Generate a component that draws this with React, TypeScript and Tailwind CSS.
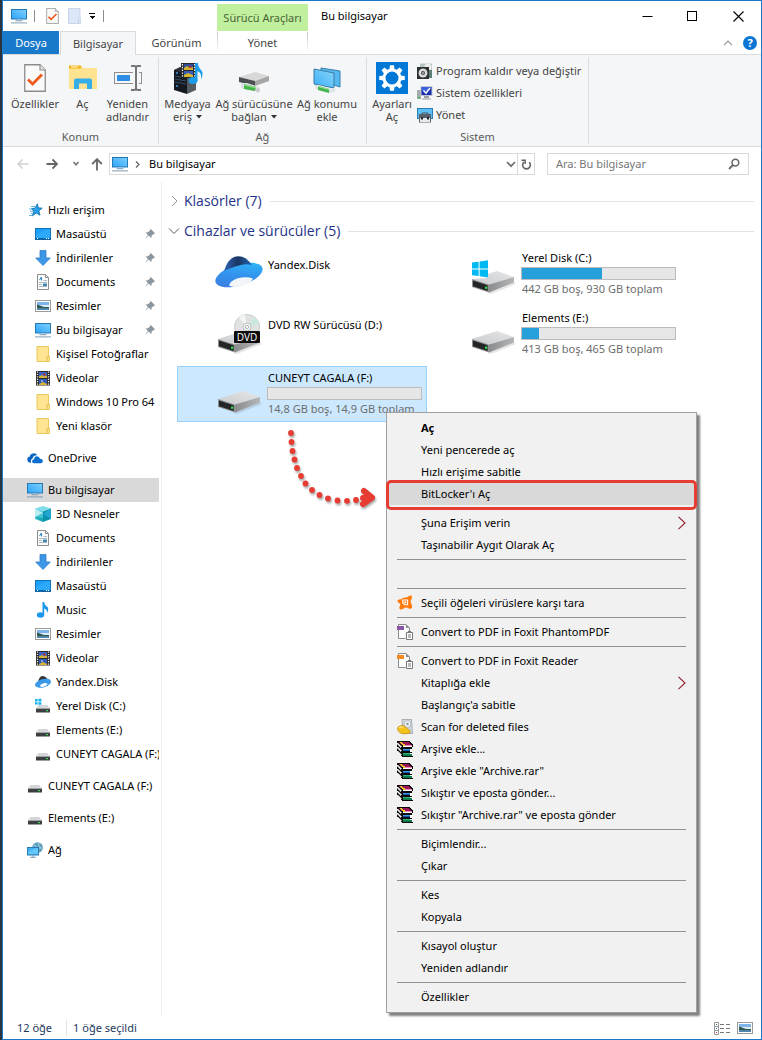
import type { ReactNode } from "react";

function PcIcon({ className = "w-4 h-4" }: { className?: string }) {
  return (
    <svg viewBox="0 0 16 16" className={className} aria-hidden="true">
      <defs>
        <linearGradient id="pcScreen" x1="0" y1="1" x2="1" y2="0">
          <stop offset="0" stopColor="#2ba3f7" />
          <stop offset="1" stopColor="#7fd0ff" />
        </linearGradient>
      </defs>
      <rect x="0.5" y="1.5" width="15" height="9.5" fill="url(#pcScreen)" stroke="#2479b5" />
      <rect x="6" y="11.5" width="4" height="1" fill="#b9cad6" />
      <rect x="4.5" y="12.3" width="7" height="0.9" fill="#6f93ad" />
      <rect x="0" y="14.4" width="16" height="1" fill="#7d9db5" />
    </svg>
  );
}

function CheckDoc({ className }: { className: string }) {
  return (
    <svg viewBox="0 0 22 28" className={className} aria-hidden="true">
      <path d="M0.75 0.75H16L21.25 6V27.25H0.75Z" fill="#fafafa" stroke="#8c8c8c" strokeWidth="1.3" />
      <path d="M16 0.75V6H21.25" fill="#e6e6e6" stroke="#8c8c8c" strokeWidth="1.1" />
      <path d="M4 15.5L8.6 20L18 10.5" fill="none" stroke="#ee5a1e" strokeWidth="2.8" />
    </svg>
  );
}

function OpenFolderIcon() {
  return (
    <svg viewBox="0 0 30 28" className="h-[28px] w-[30px]" aria-hidden="true">
      <path d="M1 2H13L15 4H29V25H1Z" fill="#ffe18c" />
      <rect x="1" y="1.5" width="12" height="3" fill="#efb416" />
      <rect x="3" y="2.3" width="7" height="1.2" fill="#fff2c4" />
      <path d="M1 6H13L15 4H29V25H1Z" fill="#ffe391" />
      <path d="M6 25V16.5Q6 14.5 8 14.5H22Q24 14.5 24 16.5V25H19V19.5H11V25Z" fill="#38aee8" />
    </svg>
  );
}

function RenameIcon() {
  return (
    <svg viewBox="0 0 30 28" className="h-[28px] w-[30px]" aria-hidden="true">
      <rect x="1.5" y="8.5" width="27" height="11" fill="#f6f7f8" stroke="#8f8f8f" />
      <rect x="4" y="11" width="13" height="6" fill="#2e8ee6" />
      <rect x="20" y="7" width="6" height="14" fill="#f5f6f7" />
      <path d="M18 2H21Q23 2 23 4Q23 2 25 2H28M23 3V25M18 26H21Q23 26 23 24Q23 26 25 26H28" fill="none" stroke="#757575" strokeWidth="2" />
    </svg>
  );
}

function MediaIcon() {
  return (
    <svg viewBox="0 0 32 32" className="h-8 w-8" aria-hidden="true">
      <path d="M2 8L15 4V32L2 28Z" fill="#14191f" />
      <path d="M15 13L24 11V28L15 32Z" fill="#565b60" />
      <path d="M2 8L8 5L24 7V12L15 13Z" fill="#2b3036" />
      <path d="M3 14L14 16M3 17L14 19M3 20L14 22" stroke="#3d5b78" strokeWidth="0.8" />
      <circle cx="5" cy="11" r="0.9" fill="#3fa9f5" />
      <circle cx="5" cy="24" r="0.9" fill="#3fa9f5" />
      <rect x="9" y="1" width="15" height="15" fill="#22262b" />
      <path d="M10.5 2V16M22.5 2V16" stroke="#f2f2f2" strokeWidth="1.2" strokeDasharray="1.4 1.4" />
      <rect x="12" y="2" width="9" height="6" fill="#324c9c" />
      <rect x="12" y="9" width="9" height="6" fill="#385cb8" />
      <path d="M12 8V6L15 4L18 6L21 5V8ZM12 15V13L16 11L21 13V15Z" fill="#d5b52f" />
      <circle cx="18" cy="5" r="1.3" fill="#b33c2b" />
      <ellipse cx="21" cy="18.5" rx="4.5" ry="3.5" fill="#1d9cea" />
      <path d="M23 19V1H26Q26 5 29.5 8.5Q32 12 29 17Q30 11 25.5 9V19Z" fill="#1d9cea" />
    </svg>
  );
}

function NetDriveIcon() {
  return (
    <svg viewBox="0 0 32 32" className="h-8 w-8" aria-hidden="true">
      <path d="M1 15L17 10L31 14L17 19Z" fill="#d9d9d9" />
      <path d="M1 15L17 19V24L1 20Z" fill="#4b4f52" />
      <path d="M17 19L31 14V19L17 24Z" fill="#a6a6a6" />
      <path d="M3 21L9 21L21 25L20 30L9 28L3 26Z" fill="#dfe3e5" />
      <path d="M6 22L18 25L17 29L6 27Z" fill="#43b54a" />
      <path d="M6 22L18 25V26.5L6 23.5Z" fill="#8cdc86" />
      <ellipse cx="20" cy="28" rx="2" ry="2.6" fill="#c8cdd0" />
    </svg>
  );
}

function NetPlaceIcon() {
  return (
    <svg viewBox="0 0 32 32" className="h-8 w-8" aria-hidden="true">
      <defs>
        <linearGradient id="npScreen" x1="0" y1="1" x2="1" y2="0">
          <stop offset="0" stopColor="#3aaef5" />
          <stop offset="1" stopColor="#8bd7fb" />
        </linearGradient>
      </defs>
      <path d="M10 6L29 9V25L10 19Z" fill="#56b9f2" stroke="#367ea9" />
      <path d="M3 7L23 11V26L3 22Z" fill="url(#npScreen)" stroke="#397ba2" />
      <path d="M4 23L8 23L21 27L24 25V30L19 31L4 27Z" fill="#dfe6e8" />
      <path d="M7 24L18 27V31L7 28Z" fill="#43b54a" />
      <path d="M7 24L18 27V28L7 25Z" fill="#9be394" />
    </svg>
  );
}

function SettingsIcon() {
  const teeth = [0, 45, 90, 135, 180, 225, 270, 315];
  return (
    <svg viewBox="0 0 32 32" className="h-8 w-8" aria-hidden="true">
      <rect width="32" height="32" fill="#0078d7" />
      {teeth.map((a) => (
        <path key={a} d="M13.4 8L14 3.2H18L18.6 8Z" fill="#fff" transform={`rotate(${a} 16 16)`} />
      ))}
      <circle cx="16" cy="16" r="8" fill="none" stroke="#fff" strokeWidth="3" />
    </svg>
  );
}

function ProgramIcon() {
  return (
    <svg viewBox="0 0 16 16" className="h-4 w-4 shrink-0" aria-hidden="true">
      <path d="M3 0.5H15V13H3Z" fill="#b9c6c0" />
      <circle cx="11" cy="4" r="3.5" fill="#e9ece8" />
      <path d="M10 7H15V15H10Z" fill="#5f7f75" />
      <rect x="0" y="4" width="12" height="12" fill="#2c2f31" />
      <circle cx="6" cy="10" r="4.5" fill="#dadada" />
      <circle cx="6" cy="10" r="2" fill="#4a4d50" />
      <circle cx="6" cy="10" r="0.8" fill="#f4f4f4" />
    </svg>
  );
}

function SystemIcon() {
  return (
    <svg viewBox="0 0 16 16" className="h-4 w-4 shrink-0" aria-hidden="true">
      <rect x="0" y="5" width="4" height="9" fill="#a5adaa" />
      <rect x="1" y="12" width="2" height="1.4" fill="#3bb54a" />
      <rect x="4" y="1.5" width="11" height="9" fill="#1a2fb0" stroke="#c3c7cb" />
      <path d="M5 2H14L11 6H4.5Z" fill="#3b61e0" />
      <path d="M6.5 5.5L9 8.2L13 3" fill="none" stroke="#fff" strokeWidth="1.5" />
      <rect x="7" y="11" width="5" height="2" fill="#9a9fa3" />
      <rect x="5" y="13" width="9" height="2" fill="#c5cacd" />
    </svg>
  );
}

function ManageIcon() {
  return (
    <svg viewBox="0 0 16 16" className="h-4 w-4 shrink-0" aria-hidden="true">
      <rect x="0.5" y="1.5" width="15" height="10" fill="#5cc0f7" stroke="#2b7fb5" />
      <path d="M5 7.5V6H11V7.5" fill="none" stroke="#4c545b" />
      <rect x="2" y="7" width="12" height="8.5" fill="#59626a" />
      <rect x="3" y="11" width="10" height="4" fill="#e8ebed" />
      <rect x="4" y="10" width="2" height="2.5" fill="#22272b" />
      <rect x="10" y="10" width="2" height="2.5" fill="#22272b" />
    </svg>
  );
}

function StarIcon() {
  return (
    <svg viewBox="0 0 16 16" className="h-4 w-4" aria-hidden="true">
      <path d="M10.4 1.8L11.2 5.8L15.2 6.2L11.8 8.8L13 13.2L9.2 11L5.5 13.8L6.8 9.4L4.6 6.6L8 6.2Z" fill="#26a0ec" stroke="#1673b0" strokeWidth="0.9" />
      <path d="M4 4.5H8M2 7H5.5M3 9.3H6M4 11.5H6M2 13.5H5" stroke="#4ea9df" strokeWidth="0.9" />
    </svg>
  );
}

function DesktopIcon() {
  return (
    <svg viewBox="0 0 16 16" className="h-4 w-4" aria-hidden="true">
      <rect x="0.5" y="2.5" width="15" height="11" fill="#1aa0fb" stroke="#1272b5" />
      <path d="M1 13V8L13 3H15V13Z" fill="#3aaffd" opacity=".6" />
      <rect x="0" y="12" width="16" height="2" fill="#0c66a8" />
      <path d="M2 12.5H3M11 12.5H12M13 12.5H14" stroke="#fff" />
    </svg>
  );
}

function DownIcon() {
  return (
    <svg viewBox="0 0 16 16" className="h-4 w-4" aria-hidden="true">
      <path d="M5 0.5H11V8H15.3L8 15.5L0.7 8H5Z" fill="#3c97e6" stroke="#2f7ec9" strokeWidth="0.8" />
    </svg>
  );
}

function DocIcon() {
  return (
    <svg viewBox="0 0 16 16" className="h-4 w-4" aria-hidden="true">
      <path d="M2.5 0.5H10.5L13.5 3.5V15.5H2.5Z" fill="#fdfdfd" stroke="#8f8f8f" />
      <path d="M10.5 0.5V3.5H13.5" fill="none" stroke="#8f8f8f" />
      <path d="M8.5 6.5H12M4 8.5H12M4 10.5H7M4 12.5H12" stroke="#9db1c0" strokeWidth="0.9" />
      <path d="M4.5 6L6.5 3V6.5" stroke="#2584cb" fill="none" />
      <rect x="8" y="9.5" width="4" height="2.5" fill="#3f87ad" />
    </svg>
  );
}

function PictureIcon() {
  return (
    <svg viewBox="0 0 16 16" className="h-4 w-4" aria-hidden="true">
      <rect x="0.5" y="2.5" width="15" height="11" fill="#fff" stroke="#9a9a9a" />
      <rect x="2" y="4" width="12" height="4" fill="#7fb4ea" />
      <rect x="2" y="7" width="12" height="2" fill="#dcebf3" />
      <path d="M2 6.5L5 7.6L9 9H14V10H2Z" fill="#315a4f" />
      <rect x="2" y="10" width="12" height="2" fill="#4f83ab" />
    </svg>
  );
}

function FolderIcon() {
  return (
    <svg viewBox="0 0 16 16" className="h-4 w-4" aria-hidden="true">
      <path d="M2 0.5H13.5V10.5H14.5V15.5H2Z" fill="#ffe591" stroke="#e9c354" strokeWidth="0.9" />
      <path d="M12 15.5V11Q12 10.3 12.8 10.3H14.3" fill="none" stroke="#e0b640" strokeWidth="0.9" />
    </svg>
  );
}

function FilmIcon() {
  return (
    <svg viewBox="0 0 16 16" className="h-4 w-4" aria-hidden="true">
      <rect x="1" y="1" width="14" height="14.5" fill="#2a2a2a" />
      <path d="M2.5 1.5V15M13.5 1.5V15" stroke="#f2f2f2" strokeWidth="1.3" strokeDasharray="1.2 1.2" />
      <rect x="4" y="2" width="8" height="6" fill="#3c66c9" />
      <rect x="4" y="9" width="8" height="6" fill="#3459b6" />
      <path d="M4 8V6.5L7 5L9 6.5L12 5.5V8ZM4 15V14L8 12L12 14V15Z" fill="#d9b535" />
      <circle cx="9.5" cy="4.5" r="1.2" fill="#b33c2b" />
      <circle cx="7" cy="11" r="1" fill="#7fc0e8" />
    </svg>
  );
}

function CloudIcon() {
  return (
    <svg viewBox="0 0 16 16" className="h-4 w-4" aria-hidden="true">
      <path d="M0.3 10Q0 7.2 2.6 6.8Q3 4 5.6 3.6Q8.6 2.6 10.4 5.4Q6.5 5 5.6 8.6Q3.6 9 4 12.8H2.6Q0.6 12.3 0.3 10Z" fill="#0a64c0" />
      <path d="M5 11.6Q5 9.3 7 9.2Q7.4 6.3 10 6.2Q12.4 6.3 13 8.8Q16 9 15.8 11.6Q15.5 13.2 13.8 13.3H6.8Q5.2 13 5 11.6Z" fill="#0a6fd0" />
    </svg>
  );
}

function CubeIcon() {
  return (
    <svg viewBox="0 0 16 16" className="h-4 w-4" aria-hidden="true">
      <path d="M8 0L16 2.5L8 5.5L0 2.5Z" fill="#7fdcea" />
      <path d="M0 2.5L8 5.5V16L0 13Z" fill="#40c4d2" />
      <path d="M8 5.5L16 2.5V13L8 16Z" fill="#0b93ad" />
      <path d="M0 2.5L8 7L0 11Z" fill="#b9eef3" />
      <path d="M16 2.5L8 8L16 13Z" fill="#22a6d0" />
      <path d="M0 11L8 16L8 12Z" fill="#1ba5b5" />
    </svg>
  );
}

function NoteIcon() {
  return (
    <svg viewBox="0 0 16 16" className="h-4 w-4" aria-hidden="true">
      <ellipse cx="5.5" cy="13" rx="3.7" ry="2.8" fill="#1b98ec" />
      <path d="M7.5 13V0H9Q9.5 3 12 4.5Q14.6 7 12 11Q12.4 7.6 9.2 6.4V13Z" fill="#1b98ec" />
    </svg>
  );
}

function Saucer({ className = "w-4 h-4" }: { className?: string }) {
  return (
    <svg viewBox="0 0 48 34" className={className} aria-hidden="true">
      <defs>
        <linearGradient id="saucerDisc" x1="0" y1="1" x2="1" y2="0">
          <stop offset="0" stopColor="#3d77dc" />
          <stop offset="0.5" stopColor="#3393ee" />
          <stop offset="1" stopColor="#2ec0fb" />
        </linearGradient>
        <linearGradient id="saucerDome" x1="0" y1="0" x2="1" y2="0">
          <stop offset="0" stopColor="#2b62b4" />
          <stop offset="0.5" stopColor="#1c3561" />
          <stop offset="1" stopColor="#2166b5" />
        </linearGradient>
      </defs>
      <ellipse cx="24" cy="20" rx="24.5" ry="10.5" fill="url(#saucerDisc)" transform="rotate(-17 24 20)" />
      <path d="M9 16Q13 4 19 2Q25 0 31 3.5Q35 7 37 10Q30 8 22 11Q14 13.5 9 16Z" fill="url(#saucerDome)" />
      <path d="M14 30.5Q15 26 22 23.5Q31 21 38 23.5Q36 27.5 29 30.5Q20 33.5 14 30.5Z" fill="#f3f5f8" />
    </svg>
  );
}

function SaucerSmall() {
  return (
    <svg viewBox="0 0 16 16" className="h-4 w-4" aria-hidden="true">
      <path d="M3 8Q4 3 7 2Q10 1.5 12.5 5L12 8Z" fill="#33373d" />
      <ellipse cx="8" cy="9.2" rx="8.2" ry="4.1" fill="#3b9ae8" transform="rotate(-16 8 9.2)" />
      <path d="M5 12.2Q5.4 9.8 9 9.2Q11.6 8.8 12.6 10Q11 12.2 8.4 12.8Q6.2 13.2 5 12.2Z" fill="#fff" />
    </svg>
  );
}

function DriveSmall({ windows = false }: { windows?: boolean }) {
  return (
    <svg viewBox="0 0 16 16" className="h-4 w-4" aria-hidden="true">
      <path d="M3.5 7H12.5L15 10.5H1Z" fill="#d4d6d8" />
      <rect x="1" y="10.5" width="14" height="4" fill="#3c3f41" />
      <rect x="1" y="10.2" width="14" height="0.8" fill="#a8abad" />
      <rect x="11" y="12" width="2" height="1.2" fill="#2ee052" />
      {windows && (
        <>
          <rect x="0" y="0" width="7" height="7" fill="#fff" />
          <path d="M0 1H2.6V3.4H0ZM3.4 0.8H6.4V3.4H3.4ZM0 4.2H2.6V6.6H0ZM3.4 4.2H6.4V6.8H3.4Z" fill="#12b3ef" />
        </>
      )}
    </svg>
  );
}

function NetworkIcon() {
  return (
    <svg viewBox="0 0 16 16" className="h-4 w-4" aria-hidden="true">
      <circle cx="10.6" cy="5.5" r="5.3" fill="#5f9fbf" />
      <path d="M7 3Q10 4 9 7M12 1Q10 4 14 6M6 6H15" stroke="#a9d3e3" fill="none" />
      <rect x="0.5" y="5.5" width="11" height="7.5" fill="#3fb2f4" stroke="#2a7cb0" />
      <path d="M1 12V10L9 6H11V12Z" fill="#76cdfb" opacity=".7" />
      <path d="M6 13V15M3 15.3H9" stroke="#7d9db5" />
    </svg>
  );
}

function DriveLarge({ kind }: { kind?: "windows" | "dvd" }) {
  return (
    <svg viewBox="0 0 48 48" className="h-12 w-12" aria-hidden="true">
      <defs>
        <linearGradient id="driveTop" x1="0" y1="1" x2="1" y2="0">
          <stop offset="0" stopColor="#c9cacc" />
          <stop offset="1" stopColor="#e6e7e9" />
        </linearGradient>
        <linearGradient id="driveSide" x1="0" y1="0" x2="1" y2="0">
          <stop offset="0" stopColor="#8b8c8e" />
          <stop offset="1" stopColor="#b5b6b8" />
        </linearGradient>
      </defs>
      <path d="M18 45L44 34L47 36L22 46Z" fill="#000" opacity=".1" />
      <path d="M3 31L28 23L45 29L20 36.5Z" fill="url(#driveTop)" />
      <path d="M20 36.5L45 29V34.5L20 44.5Z" fill="url(#driveSide)" />
      <path d="M3 31L20 36.5V44.5L3 39Z" fill="#8f9092" />
      <path d="M4 32.6L18.7 37.2V43L4 38.2Z" fill="#232527" />
      <rect x="16" y="38.6" width="2.2" height="2.2" fill="#2fe04d" />
      {kind === "windows" && (
        <>
          <path d="M3 14L19 12V30L3 31Z" fill="#fff" />
          <path d="M3 14.6L9.6 13.7V20.4H3ZM10.6 13.5L19 12.3V20.4H10.6ZM3 21.4H9.6V28L3 27.2ZM10.6 21.4H19V29.4L10.6 28.2Z" fill="#00b9f2" />
        </>
      )}
      {kind === "dvd" && (
        <>
          <circle cx="32" cy="19" r="12.6" fill="#dfe2e2" stroke="#c4c8c9" strokeWidth="0.8" />
          <path d="M32 19L24 9.5A12.6 12.6 0 0 1 30 6.6Z" fill="#f3f5f4" />
          <path d="M32 19L40 9.5A12.6 12.6 0 0 1 43.6 14.4Z" fill="#c4ead9" />
          <path d="M32 19L20 21.5A12.6 12.6 0 0 0 22 26.5Z" fill="#e8dcea" />
          <circle cx="32" cy="19" r="4" fill="#f1f3f3" stroke="#b5b9ba" strokeWidth="0.8" />
          <circle cx="32" cy="19" r="1.6" fill="#fff" stroke="#a2a6a7" strokeWidth="0.8" />
          <rect x="19" y="23" width="26" height="12" rx="1" fill="#0e0e0e" />
          <text x="32" y="32.8" textAnchor="middle" fontSize="10" fontFamily="Open Sans, sans-serif" fill="#fff">DVD</text>
        </>
      )}
    </svg>
  );
}

function PinIcon() {
  return (
    <svg viewBox="0 0 12 12" className="h-3 w-3" aria-hidden="true">
      <path d="M6.5 0.8L11.2 5.5L9.6 6L7.6 7.8L7.2 10.2L4.6 7.6L0.8 11.2L3.9 6.9L1.6 4.6L4 4.3L6 2.4Z" fill="#8a959e" />
    </svg>
  );
}

function AvastIcon() {
  return (
    <svg viewBox="0 0 16 16" className="h-4 w-4" aria-hidden="true">
      <path d="M9.5 2.6Q12.6 0 14.6 0.6Q15.6 3 13.6 6Q13.6 8.4 15.2 11Q15.4 13.8 12.8 14Q10.6 12.6 8 12.6Q5.6 14.8 3.2 14.6Q1.4 13.2 3.4 10Q3.4 8.4 0.8 7Q-0.2 5.4 1.6 4.4Q4.2 4.6 5.4 3.2Q7.4 2 9.5 2.6Z" fill="#ff7a0a" />
      <path d="M5.8 5H10.6V9.8H7.6L5.8 8Z" fill="none" stroke="#fff" strokeWidth="1.1" />
      <circle cx="8.2" cy="7.4" r="1.1" fill="#fff" />
    </svg>
  );
}

function FoxitIcon({ color }: { color: string }) {
  return (
    <svg viewBox="0 0 16 16" className="h-4 w-4" aria-hidden="true">
      <path d="M1.5 0.5H9L12.5 4V14.5H1.5Z" fill="#fff" stroke="#8b8b8b" />
      <path d="M9 0.5V4H12.5Z" fill="#8b8b8b" />
      <rect x="0" y="2" width="7" height="4" fill={color} />
      <rect x="8.5" y="7" width="7.5" height="9" fill="#f1f1f1" />
      <path d="M9.5 8.5H15.5V15.5H9.5Z" fill="#fff" stroke="#777" />
      <path d="M11 7.5H14M11 11H14M11 13H14" stroke="#777" />
    </svg>
  );
}

function ScanIcon() {
  return (
    <svg viewBox="0 0 16 16" className="h-4 w-4" aria-hidden="true">
      <path d="M5 0.5H14.5L15.5 14.5H6Z" fill="#cfd6dc" stroke="#9aa3ab" strokeWidth="0.8" />
      <circle cx="10.5" cy="5" r="3.4" fill="#eef2f5" stroke="#9fa9b2" strokeWidth="0.7" />
      <circle cx="10.5" cy="5" r="1.2" fill="#8593a0" />
      <path d="M0.5 10Q0.5 7 4 6.5Q8 6 9.5 9L13 11.5V14L8.5 14.8Q2 15.5 0.5 10Z" fill="#f4c21b" stroke="#bd8b0c" strokeWidth="0.7" />
      <path d="M2 9Q3.4 7.4 6 8" fill="none" stroke="#fff3b0" />
    </svg>
  );
}

function RarIcon() {
  return (
    <svg viewBox="0 0 16 16" className="h-4 w-4" shapeRendering="crispEdges" aria-hidden="true">
      <path d="M0 0H12L16 4V6H15V15H16V16H5L0 11Z" fill="#0c0a0a" />
      <path d="M1 1H11L14 4H5Z" fill="#9c1458" />
      <path d="M5 4H15V5H6Z" fill="#f08cc0" />
      <path d="M6 5H15V6H6Z" fill="#fff" />
      <path d="M3 1H5L6 3H8V5H6Z" fill="#e8d020" />
      <path d="M6 8H15V9H6Z" fill="#3d9be8" />
      <path d="M6 9H15V10H6Z" fill="#1556b0" />
      <path d="M13 8H15V11H13Z" fill="#fff" />
      <path d="M6 12H15V13H6Z" fill="#2fb57c" />
      <path d="M6 13H15V15H6Z" fill="#0b7c4a" />
      <path d="M13 12H15V13H13Z" fill="#fff" />
      <path d="M0 2H1V3H2V4H3V5H4V6H3V5H2V4H1V3H0ZM0 6H1V7H2V8H3V9H4V10H3V9H2V8H1V7H0ZM0 10H1V11H2V12H3V13H4V14H3V13H2V12H1V11H0Z" fill="#f3f3f3" stroke="#f3f3f3" strokeWidth="0.6" />
    </svg>
  );
}

type RibbonButtonProps = { icon: ReactNode; lines: string[]; menu?: boolean; className: string };

function RibbonButton({ icon, lines, menu = false, className }: RibbonButtonProps) {
  return (
    <button type="button" className={`flex shrink-0 flex-col items-center whitespace-nowrap text-[#444] ${className}`}>
      <span className="flex h-8 items-center justify-center">{icon}</span>
      <span className="mt-[3px] leading-[13px]">
        {lines.map((line, i) => (
          <span key={line} className="flex items-center justify-center gap-1">
            {line}
            {menu && i === lines.length - 1 && (
              <svg viewBox="0 0 6 4" className="h-1 w-1.5" aria-hidden="true">
                <path d="M0 0H6L3 3.5Z" fill="#333" />
              </svg>
            )}
          </span>
        ))}
      </span>
    </button>
  );
}

function RibbonGroup({ label, className, children }: { label: string; className: string; children: ReactNode }) {
  return (
    <section aria-label={label} className={`my-0.5 flex shrink-0 flex-col justify-between border-r border-[#dcdde0] ${className}`}>
      <div className="flex pt-[5px]">{children}</div>
      <h2 className="text-center leading-[14px] text-[#5a5a5a]">{label}</h2>
    </section>
  );
}

type NavItem = { label: string; icon: ReactNode; level?: boolean; pinned?: boolean; selected?: boolean };

const navGroups: NavItem[][] = [
  [
    { label: "Hızlı erişim", icon: <StarIcon /> },
    { label: "Masaüstü", icon: <DesktopIcon />, level: true, pinned: true },
    { label: "İndirilenler", icon: <DownIcon />, level: true, pinned: true },
    { label: "Documents", icon: <DocIcon />, level: true, pinned: true },
    { label: "Resimler", icon: <PictureIcon />, level: true, pinned: true },
    { label: "Bu bilgisayar", icon: <PcIcon />, level: true, pinned: true },
    { label: "Kişisel Fotoğraflar", icon: <FolderIcon />, level: true },
    { label: "Videolar", icon: <FilmIcon />, level: true },
    { label: "Windows 10 Pro 64", icon: <FolderIcon />, level: true },
    { label: "Yeni klasör", icon: <FolderIcon />, level: true },
  ],
  [{ label: "OneDrive", icon: <CloudIcon /> }],
  [
    { label: "Bu bilgisayar", icon: <PcIcon />, selected: true },
    { label: "3D Nesneler", icon: <CubeIcon />, level: true },
    { label: "Documents", icon: <DocIcon />, level: true },
    { label: "İndirilenler", icon: <DownIcon />, level: true },
    { label: "Masaüstü", icon: <DesktopIcon />, level: true },
    { label: "Music", icon: <NoteIcon />, level: true },
    { label: "Resimler", icon: <PictureIcon />, level: true },
    { label: "Videolar", icon: <FilmIcon />, level: true },
    { label: "Yandex.Disk", icon: <SaucerSmall />, level: true },
    { label: "Yerel Disk (C:)", icon: <DriveSmall windows />, level: true },
    { label: "Elements (E:)", icon: <DriveSmall />, level: true },
    { label: "CUNEYT CAGALA (F:)", icon: <DriveSmall />, level: true },
  ],
  [{ label: "CUNEYT CAGALA (F:)", icon: <DriveSmall /> }],
  [{ label: "Elements (E:)", icon: <DriveSmall /> }],
  [{ label: "Ağ", icon: <NetworkIcon /> }],
];

type Drive = { name: string; icon: ReactNode; used?: number; info?: string; selected?: boolean };

const drives: Drive[] = [
  { name: "Yandex.Disk", icon: <Saucer className="h-[34px] w-12" /> },
  { name: "Yerel Disk (C:)", icon: <DriveLarge kind="windows" />, used: 52, info: "442 GB boş, 930 GB toplam" },
  { name: "DVD RW Sürücüsü (D:)", icon: <DriveLarge kind="dvd" /> },
  { name: "Elements (E:)", icon: <DriveLarge />, used: 11, info: "413 GB boş, 465 GB toplam" },
  { name: "CUNEYT CAGALA (F:)", icon: <DriveLarge />, used: 0, info: "14,8 GB boş, 14,9 GB toplam", selected: true },
];

type MenuEntry = { label: string; icon?: ReactNode; bold?: boolean; sub?: boolean; hot?: boolean } | "line" | "blank";

const menuEntries: MenuEntry[] = [
  { label: "Aç", bold: true },
  { label: "Yeni pencerede aç" },
  { label: "Hızlı erişime sabitle" },
  { label: "BitLocker'ı Aç", hot: true },
  "line",
  { label: "Şuna Erişim verin", sub: true },
  { label: "Taşınabilir Aygıt Olarak Aç" },
  "line",
  "blank",
  "line",
  { label: "Seçili öğeleri virüslere karşı tara", icon: <AvastIcon /> },
  "line",
  { label: "Convert to PDF in Foxit PhantomPDF", icon: <FoxitIcon color="#8a56a8" /> },
  "line",
  { label: "Convert to PDF in Foxit Reader", icon: <FoxitIcon color="#f68a1f" /> },
  { label: "Kitaplığa ekle", sub: true },
  { label: "Başlangıç'a sabitle" },
  { label: "Scan for deleted files", icon: <ScanIcon /> },
  { label: "Arşive ekle...", icon: <RarIcon /> },
  { label: 'Arşive ekle "Archive.rar"', icon: <RarIcon /> },
  { label: "Sıkıştır ve eposta gönder...", icon: <RarIcon /> },
  { label: 'Sıkıştır "Archive.rar" ve eposta gönder', icon: <RarIcon /> },
  "line",
  { label: "Biçimlendir..." },
  { label: "Çıkar" },
  "line",
  { label: "Kes" },
  { label: "Kopyala" },
  "line",
  { label: "Kısayol oluştur" },
  { label: "Yeniden adlandır" },
  "line",
  { label: "Özellikler" },
];

const trail = [
  [6, 6], [6.5, 15], [7.5, 24], [9.5, 32.5], [12, 41], [16, 49], [20.5, 56.5], [27, 63],
  [34.5, 68], [43, 71.5], [52.5, 73.5], [62, 73.8], [71, 73],
];

function TitleBar() {
  return (
    <div className="flex h-[30px] items-stretch">
      <div className="flex w-[214px] shrink-0 items-center gap-[7px] pl-2">
        <PcIcon className="h-4 w-4" />
        <span className="h-3 w-px bg-[#8f8f8f]" />
        <button type="button" aria-label="Özellikler" className="ml-1">
          <CheckDoc className="h-4 w-[13px]" />
        </button>
        <button type="button" aria-label="Yeni klasör" className="ml-0.5">
          <svg viewBox="0 0 13 16" className="h-4 w-[13px]" aria-hidden="true">
            <path d="M0.5 0.5H12V10.5H12.8V15.5H0.5Z" fill="#dce7f7" stroke="#c8d6ec" />
            <path d="M10.5 15V11" stroke="#c0cfe8" />
          </svg>
        </button>
        <button type="button" aria-label="Hızlı Erişim Araç Çubuğunu Özelleştir">
          <svg viewBox="0 0 8 6" className="h-1.5 w-2" shapeRendering="crispEdges" aria-hidden="true">
            <path d="M1 0H7V1H1ZM1 3H7L4 6Z" fill="#111" />
          </svg>
        </button>
        <span className="h-3 w-px bg-[#8f8f8f]" />
      </div>
      <div className="mt-[3px] flex w-[91px] shrink-0 items-center justify-center whitespace-nowrap bg-[#c0ef9d] text-[#4b6337]">
        Sürücü Araçları
      </div>
      <h1 className="flex flex-1 items-center pl-[13px] text-black">Bu bilgisayar</h1>
      <div className="flex">
        <button type="button" aria-label="Simge durumuna küçült" className="flex w-[45px] items-center justify-center">
          <svg viewBox="0 0 11 11" className="h-[11px] w-[11px]" aria-hidden="true"><path d="M0.5 5.5H10.5" stroke="#000" /></svg>
        </button>
        <button type="button" aria-label="Ekranı kapla" className="flex w-[45px] items-center justify-center">
          <svg viewBox="0 0 11 11" className="h-[11px] w-[11px]" aria-hidden="true"><rect x="0.5" y="0.5" width="9" height="9" fill="none" stroke="#000" /></svg>
        </button>
        <button type="button" aria-label="Kapat" className="flex w-[46px] items-center justify-center">
          <svg viewBox="0 0 11 11" className="h-[11px] w-[11px]" aria-hidden="true"><path d="M0.5 0.5L10.5 10.5M10.5 0.5L0.5 10.5" stroke="#000" strokeWidth="1.1" /></svg>
        </button>
      </div>
    </div>
  );
}

function TabBar() {
  return (
    <nav aria-label="Şerit" className="flex h-6 items-stretch border-b border-[#dadbdc] text-[#444]">
      <button type="button" className="w-14 bg-[#1979ca] text-white">Dosya</button>
      <button type="button" className="-mb-px ml-px w-[76px] border border-b-0 border-[#dadbdc] bg-[#f5f6f7]">Bilgisayar</button>
      <button type="button" className="ml-[3px] w-[75px]">Görünüm</button>
      <div className="ml-[3px] flex w-[91px] justify-between">
        <span className="my-px w-px bg-linear-to-b from-[#c8c8c8] to-white" />
        <button type="button" className="flex-1">Yönet</button>
        <span className="my-px w-px bg-linear-to-b from-[#c8c8c8] to-white" />
      </div>
      <div className="ml-auto flex items-center gap-2.5 pr-1">
        <button type="button" aria-label="Şeridi küçült">
          <svg viewBox="0 0 10 6" className="h-1.5 w-2.5" aria-hidden="true"><path d="M1 5L5 1L9 5" fill="none" stroke="#9b9b9b" strokeWidth="1.2" /></svg>
        </button>
        <button type="button" aria-label="Yardım" className="flex h-3.5 w-3.5 items-center justify-center rounded-full bg-[#0a77d5] text-[11px] font-bold leading-[14px] text-white">?</button>
      </div>
    </nav>
  );
}

function Ribbon() {
  return (
    <div className="flex h-[92px] border-b border-[#dadbdc] bg-[#f5f6f7]">
      <RibbonGroup label="Konum" className="w-[156px]">
        <RibbonButton className="w-16" icon={<CheckDoc className="h-7 w-[22px]" />} lines={["Özellikler"]} />
        <RibbonButton className="w-[31px]" icon={<OpenFolderIcon />} lines={["Aç"]} />
        <RibbonButton className="w-[59px]" icon={<RenameIcon />} lines={["Yeniden", "adlandır"]} />
      </RibbonGroup>
      <RibbonGroup label="Ağ" className="w-[208px]">
        <RibbonButton className="w-[57px]" icon={<MediaIcon />} lines={["Medyaya", "eriş"]} menu />
        <RibbonButton className="w-[76px]" icon={<NetDriveIcon />} lines={["Ağ sürücüsüne", "bağlan"]} menu />
        <RibbonButton className="w-[70px]" icon={<NetPlaceIcon />} lines={["Ağ konumu", "ekle"]} />
      </RibbonGroup>
      <RibbonGroup label="Sistem" className="w-[222px]">
        <RibbonButton className="w-[50px]" icon={<SettingsIcon />} lines={["Ayarları", "Aç"]} />
        <div className="flex flex-col text-[#444]">
          <button type="button" className="flex h-[22px] items-center gap-[3px] whitespace-nowrap pb-1"><ProgramIcon />Program kaldır veya değiştir</button>
          <button type="button" className="flex h-[22px] items-center gap-[3px] whitespace-nowrap pb-1"><SystemIcon />Sistem özellikleri</button>
          <button type="button" className="flex h-[22px] items-center gap-[3px] whitespace-nowrap pb-1"><ManageIcon />Yönet</button>
        </div>
      </RibbonGroup>
    </div>
  );
}

function AddressBar() {
  return (
    <div className="flex items-center pb-[7px] pl-3.5 pr-3 pt-1.5">
      <button type="button" aria-label="Geri" className="mr-[17px]">
        <svg viewBox="0 0 12 12" className="h-3 w-3" aria-hidden="true"><path d="M11.5 6H1M5.5 1.5L1 6L5.5 10.5" fill="none" stroke="#cfcfcf" strokeWidth="1.5" /></svg>
      </button>
      <button type="button" aria-label="İleri" className="mr-3.5">
        <svg viewBox="0 0 12 12" className="h-3 w-3" aria-hidden="true"><path d="M0.5 6H11M6.5 1.5L11 6L6.5 10.5" fill="none" stroke="#666" strokeWidth="1.8" /></svg>
      </button>
      <button type="button" aria-label="Son konumlar" className="mr-[11px]">
        <svg viewBox="0 0 8 6" className="h-1.5 w-2" aria-hidden="true"><path d="M1.5 1L4 3.8L6.5 1" fill="none" stroke="#777" strokeWidth="1.6" /></svg>
      </button>
      <button type="button" aria-label="Yukarı" className="mr-1.5">
        <svg viewBox="0 0 12 13" className="h-[13px] w-3" aria-hidden="true"><path d="M6 12.5V1.5M1.2 6L6 1.2L10.8 6" fill="none" stroke="#666" strokeWidth="1.8" /></svg>
      </button>
      <div className="flex h-[22px] min-w-0 flex-1 items-stretch border border-[#d9d9d9]">
        <div className="flex flex-1 items-center pl-0.5">
          <PcIcon className="h-4 w-4" />
          <svg viewBox="0 0 5 7" className="ml-[7px] h-[7px] w-[5px]" aria-hidden="true"><path d="M1 0.5L4 3.5L1 6.5" fill="none" stroke="#666" strokeWidth="1.3" /></svg>
          <button type="button" className="ml-[9px] text-black">Bu bilgisayar</button>
        </div>
        <button type="button" aria-label="Önceki konumlar" className="flex w-[13px] items-center justify-center">
          <svg viewBox="0 0 10 7" className="h-[7px] w-2.5" aria-hidden="true"><path d="M1 1L5 5.2L9 1" fill="none" stroke="#707070" strokeWidth="1.7" /></svg>
        </button>
        <button type="button" aria-label="Yenile" className="flex w-[17px] items-center justify-center border-l border-[#d9d9d9]">
          <svg viewBox="0 0 12 12" className="h-[11px] w-[11px]" aria-hidden="true"><path d="M3.4 3.2A4.2 4.2 0 1 0 9 3.6" fill="none" stroke="#666" strokeWidth="1.8" /><path d="M4.6 5.4V1.4H0.4" fill="none" stroke="#666" strokeWidth="1.6" /></svg>
        </button>
      </div>
      <label className="ml-3 flex h-[22px] w-[202px] items-center border border-[#d9d9d9] px-2">
        <input type="search" aria-label="Ara" placeholder="Ara: Bu bilgisayar" className="min-w-0 flex-1 bg-transparent outline-none placeholder:text-[#767676]" />
        <svg viewBox="0 0 12 12" className="h-3 w-3" aria-hidden="true"><circle cx="7.4" cy="4.6" r="3.4" fill="none" stroke="#666" strokeWidth="1.5" /><path d="M5 7L1 11" stroke="#666" strokeWidth="1.8" /></svg>
      </label>
    </div>
  );
}

function Sidebar() {
  return (
    <nav aria-label="Gezinti bölmesi" className="flex w-[159px] shrink-0 flex-col gap-2 border-r border-[#f0f0f0] pr-0.5 pt-4">
      {navGroups.map((group, g) => (
        <ul key={g}>
          {group.map((item) => (
            <li key={item.label}>
              <a
                href="#"
                className={`flex h-6 items-center gap-[5px] overflow-hidden whitespace-nowrap text-black ${item.level ? "pl-8" : "pl-6"} ${item.selected ? "bg-[#d9d9d9]" : ""}`}
              >
                <span className="shrink-0">{item.icon}</span>
                <span className="flex-1 overflow-hidden">{item.label}</span>
                {item.pinned && <span className="pr-[3px]"><PinIcon /></span>}
              </a>
            </li>
          ))}
        </ul>
      ))}
    </nav>
  );
}

function SectionHeading({ title, open }: { title: string; open: boolean }) {
  return (
    <h2 className="flex h-[30px] items-center font-['Open_Sans','Noto_Sans',sans-serif] text-sm text-[#1e3287]">
      <button type="button" aria-expanded={open} className="flex items-center gap-1 whitespace-nowrap">
        <svg viewBox="0 0 12 12" className="h-3 w-3" aria-hidden="true">
          <path d={open ? "M1 3.5L6 8.5L11 3.5" : "M4 1L9 6L4 11"} fill="none" stroke={open ? "#555" : "#999"} />
        </svg>
        {title}
      </button>
      <span className="ml-2 h-px flex-1 bg-[#e2e2e2]" />
    </h2>
  );
}

function DriveTile({ drive }: { drive: Drive }) {
  const selected = drive.selected ? "border-[#99d1ff] bg-[#cce8ff]" : "border-transparent";
  return (
    <button type="button" className={`flex h-14 w-[250px] items-start border pl-[37px] text-left ${selected}`}>
      <span className="flex h-[50px] w-12 shrink-0 items-center justify-center">{drive.icon}</span>
      <span className={`ml-1 flex min-w-0 flex-1 flex-col pr-1 ${drive.info ? "pt-[3px]" : "pt-2.5"}`}>
        <span className="pl-px leading-4 text-black">{drive.name}</span>
        {drive.info && (
          <>
            <span className="mt-px block h-[13px] border border-[#bcbcbc] bg-[#e6e6e6]">
              <span className="block h-full bg-[#26a0da]" style={{ width: `${drive.used}%` }} />
            </span>
            <span className="whitespace-nowrap pl-px leading-[18px] text-[#6d6d6d]">{drive.info}</span>
          </>
        )}
      </span>
    </button>
  );
}

function ContextMenu() {
  return (
    <div role="menu" aria-label="CUNEYT CAGALA (F:)" className="absolute left-[386px] top-[412px] w-[311px] border border-[#a0a0a0] bg-[#f1f1f1] pb-1 pt-1 shadow-[3px_3px_2px_rgba(0,0,0,0.5)]">
      {menuEntries.map((entry, i) => {
        if (entry === "line") {
          return <div key={i} role="separator" className="mx-2.5 h-[7px] pt-[3px]"><div className="h-px bg-[#919191]" /></div>;
        }
        if (entry === "blank") {
          return <div key={i} className="h-[22px]" />;
        }
        return (
          <button
            key={i}
            type="button"
            role="menuitem"
            className={`relative flex h-[22px] w-full items-center px-2.5 text-left text-black ${entry.bold ? "font-bold" : ""} ${entry.hot ? "bg-[#d9d9d9]" : ""}`}
          >
            <span className="mr-2 w-4 shrink-0">{entry.icon}</span>
            <span className="flex-1 whitespace-nowrap">{entry.label}</span>
            {entry.sub && (
              <svg viewBox="0 0 8 14" className="h-3.5 w-2" aria-hidden="true"><path d="M0.5 0.8L7 7L0.5 13.2" fill="none" stroke="#8c1c2c" strokeWidth="1.1" /></svg>
            )}
            {entry.hot && <span className="absolute -inset-x-px -bottom-[5px] -top-[3px] z-10 rounded-[5px] border-[3px] border-[#e63c32]" />}
          </button>
        );
      })}
    </div>
  );
}

function StatusBar() {
  return (
    <footer className="flex h-[22px] items-center pl-3.5 pr-2 text-[#1e395b]">
      <span className="border-r border-[#e4e4e4] pr-3.5">12 öğe</span>
      <span className="pl-1.5">1 öğe seçildi</span>
      <div className="ml-auto flex items-center gap-[7px]">
        <button type="button" aria-label="Ayrıntılar">
          <svg viewBox="0 0 16 13" className="h-[13px] w-4" aria-hidden="true">
            <path d="M0.5 0.5H4.5V12.5H0.5ZM0.5 4.5H4.5M0.5 8.5H4.5" fill="#fff" stroke="#999" />
            <path d="M6 2.5H10M12 2.5H16M6 6.5H10M12 6.5H16M6 10.5H10M12 10.5H16" stroke="#777" />
            <path d="M2 2.5H3" stroke="#3a8c4a" /><path d="M2 6.5H3" stroke="#3a74e0" /><path d="M2 10.5H3" stroke="#d0202a" />
          </svg>
        </button>
        <button type="button" aria-label="Büyük simgeler"><PictureIcon /></button>
      </div>
    </footer>
  );
}

export default function App() {
  return (
    <div className="relative min-h-screen bg-[#2c3440] pl-0.5 font-['Noto_Sans','Open_Sans',sans-serif] text-[11px] leading-4">
      <div className="flex min-h-screen flex-col border border-[#1979ca] bg-white">
        <header>
          <TitleBar />
          <TabBar />
          <Ribbon />
          <AddressBar />
        </header>
        <div className="flex flex-1">
          <Sidebar />
          <main className="min-w-0 flex-1 pl-1.5 pr-[7px] pt-1">
            <SectionHeading title="Klasörler (7)" open={false} />
            <SectionHeading title="Cihazlar ve sürücüler (5)" open />
            <div className="grid grid-cols-[250px_250px] gap-1 pl-[9px]">
              {drives.map((drive) => (
                <DriveTile key={drive.name} drive={drive} />
              ))}
            </div>
          </main>
        </div>
        <StatusBar />
      </div>
      <svg viewBox="0 0 96 84" className="absolute left-[285px] top-[427px] z-10 h-[84px] w-[96px] drop-shadow-[1px_2px_1px_rgba(0,0,0,0.35)]" aria-hidden="true">
        {trail.map(([x, y]) => (
          <circle key={`${x}-${y}`} cx={x} cy={y} r="2.9" fill="#e63c32" />
        ))}
        <path d="M79 64L87 70.5L78 77M78 71H84" fill="none" stroke="#e63c32" strokeWidth="6" strokeLinecap="round" strokeLinejoin="round" />
      </svg>
      <ContextMenu />
    </div>
  );
}
